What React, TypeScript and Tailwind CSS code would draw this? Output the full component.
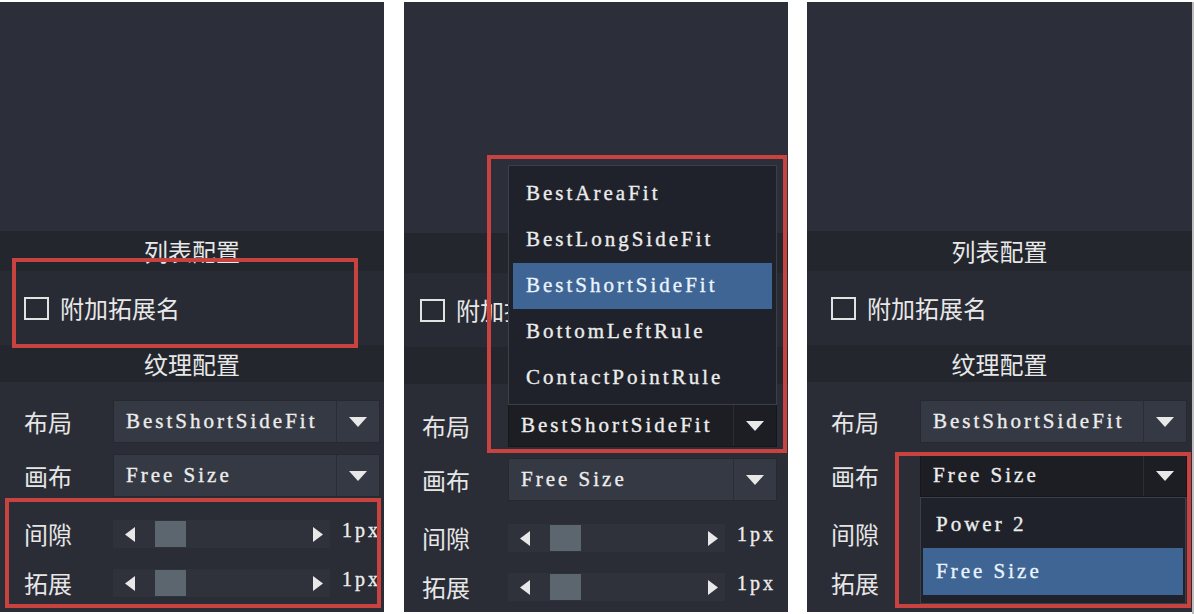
import React from "react";

const SERIF =
  "font-['Liberation_Serif','Times_New_Roman',serif] tracking-[3px] [-webkit-text-stroke:0.35px_currentColor]";
const CJK = "font-['Noto_Sans_CJK_SC','Noto_Sans',sans-serif]";

function DownTri() {
  return (
    <svg width="18" height="10" viewBox="0 0 18 10">
      <polygon points="0,0 18,0 9,10" fill="#e8e8e8" />
    </svg>
  );
}
function LeftTri() {
  return (
    <svg width="10" height="15" viewBox="0 0 10 15">
      <polygon points="10,0 10,15 0,7.5" fill="#e8e8e8" />
    </svg>
  );
}
function RightTri() {
  return (
    <svg width="10" height="15" viewBox="0 0 10 15">
      <polygon points="0,0 0,15 10,7.5" fill="#e8e8e8" />
    </svg>
  );
}

function Select({ value, open, wide }: { value: string; open?: boolean; wide?: boolean }) {
  return (
    <div
      className={`flex h-[43px] shrink-0 items-stretch border ${wide ? "w-[269px]" : "w-[267px]"} ${
        open ? "border-[#15171c] bg-[#1c1e24]" : "border-[#262930] bg-[#353943]"
      }`}
    >
      <div className={`flex flex-1 items-center pl-[12px] text-[21px] text-[#ececec] ${SERIF}`}>{value}</div>
      <div className="flex w-[43px] items-center justify-center border-l border-[#2a2d34]">
        <DownTri />
      </div>
    </div>
  );
}

function Slider({ label, hidden, labelCls }: { label: string; hidden?: boolean; labelCls: string }) {
  return (
    <div className="flex h-[42px] shrink-0 items-center">
      <span className={`${labelCls} shrink-0 text-[24px] leading-none text-[#e6e6e6] ${CJK}`}>{label}</span>
      {!hidden && (
        <>
          <div className="flex h-[28px] w-[217px] shrink-0 items-center bg-[#2f323b] pl-[12px] pr-[7px]">
            <LeftTri />
            <div className="ml-[20px] h-[26px] w-[31px] bg-[#5b666e]" />
            <div className="flex-1" />
            <RightTri />
          </div>
          <span className={`-mt-[8px] ml-[12px] text-[20px] text-[#ececec] ${SERIF}`}>1px</span>
        </>
      )}
    </div>
  );
}

function Panel({ variant }: { variant: 1 | 2 | 3 }) {
  const p2 = variant === 2;
  const labelCls = p2 ? "w-[104px] pl-[18px]" : "w-[113px] pl-[24px]";
  return (
    <div
      className={`relative flex h-[610px] shrink-0 flex-col overflow-hidden bg-[#2c2f39] ${
        variant === 3 ? "w-[385px]" : "w-[384px]"
      }`}
    >
      <div className={`shrink-0 ${p2 ? "h-[231px]" : "h-[229px]"}`} />
      <div
        className={`flex h-[40px] shrink-0 items-center justify-center bg-[#23262d] text-[24px] text-[#e8e8e8] ${CJK}`}
      >
        列表配置
      </div>
      <div
        className={`flex h-[74px] shrink-0 items-center gap-[11px] bg-[#282b34] ${p2 ? "pl-[16px]" : "pl-[24px]"}`}
      >
        <div className="h-[23px] w-[25px] border-2 border-[#e2e2e2]" />
        <span className={`text-[24px] text-[#e8e8e8] ${CJK}`}>附加拓展名</span>
      </div>
      <div
        className={`flex h-[37px] shrink-0 items-center justify-center bg-[#23262d] text-[24px] text-[#e8e8e8] ${CJK}`}
      >
        纹理配置
      </div>
      <div className={`flex flex-1 flex-col bg-[#2a2d36] ${p2 ? "pt-[20px]" : "pt-[18px]"}`}>
        <div className="flex h-[43px] shrink-0 items-center">
          <span className={`${labelCls} shrink-0 text-[24px] leading-none text-[#e6e6e6] ${CJK}`}>布局</span>
          <Select value="BestShortSideFit" open={p2} wide={p2} />
        </div>
        <div className="mt-[11px] flex h-[43px] shrink-0 items-center">
          <span className={`${labelCls} shrink-0 text-[24px] leading-none text-[#e6e6e6] ${CJK}`}>画布</span>
          <Select value="Free Size" open={variant === 3} wide={p2} />
        </div>
        <div className="mt-[16px] shrink-0">
          <Slider label="间隙" labelCls={labelCls} hidden={variant === 3} />
        </div>
        <div className="mt-[7px] shrink-0">
          <Slider label="拓展" labelCls={labelCls} hidden={variant === 3} />
        </div>
      </div>

      {variant === 1 && (
        <>
          <div className="absolute left-[12px] top-[256px] h-[90px] w-[346px] border-[4px] border-[#c8433f]" />
          <div className="absolute left-[5px] top-[496px] h-[110px] w-[376px] border-[4px] border-[#c8433f]" />
        </>
      )}

      {variant === 2 && (
        <>
          <div className="absolute left-[104px] top-[163px] flex h-[240px] w-[269px] flex-col border border-[#3b3f49] bg-[#1f222a] px-[4px] pt-[5px]">
            {["BestAreaFit", "BestLongSideFit", "BestShortSideFit", "BottomLeftRule", "ContactPointRule"].map(
              (t) => (
                <div
                  key={t}
                  className={`flex h-[46px] shrink-0 items-center pl-[13px] text-[21px] ${SERIF} ${
                    t === "BestShortSideFit" ? "bg-[#3f6594] text-[#eaf4ff]" : "text-[#ececec]"
                  }`}
                >
                  {t}
                </div>
              )
            )}
          </div>
          <div className="absolute left-[83px] top-[153px] h-[298px] w-[300px] border-[4px] border-[#c8433f]" />
        </>
      )}

      {variant === 3 && (
        <>
          <div className="absolute left-[113px] top-[495px] flex h-[107px] w-[266px] flex-col border border-[#3b3f49] bg-[#1f222a] px-[2px] pt-[3px]">
            {["Power 2", "Free Size"].map((t) => (
              <div
                key={t}
                className={`flex h-[47px] shrink-0 items-center pl-[13px] text-[21px] ${SERIF} ${
                  t === "Free Size" ? "bg-[#3f6594] text-[#eaf4ff]" : "text-[#ececec]"
                }`}
              >
                {t}
              </div>
            ))}
          </div>
          <div className="absolute left-[88px] top-[450px] h-[156px] w-[296px] border-[4px] border-[#c8433f]" />
        </>
      )}
    </div>
  );
}

export default function App() {
  return (
    <div className="flex h-[614px] w-[1194px] overflow-hidden bg-white pt-[2px]">
      <Panel variant={1} />
      <div className="w-[20px] shrink-0" />
      <Panel variant={2} />
      <div className="w-[19px] shrink-0" />
      <Panel variant={3} />
      <div className="w-[2px] shrink-0 bg-[#bdbdbd]" />
    </div>
  );
}
